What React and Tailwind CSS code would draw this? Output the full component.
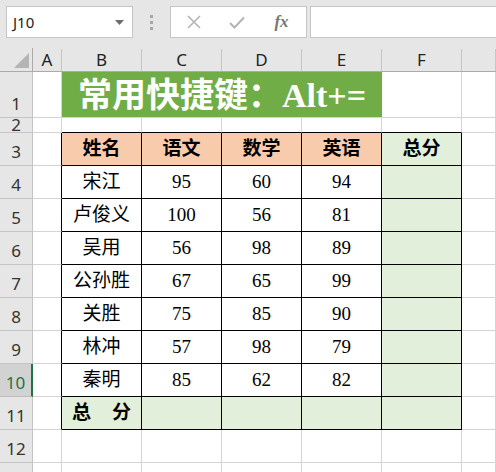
const rows = [
  ["宋江", "95", "60", "94"],
  ["卢俊义", "100", "56", "81"],
  ["吴用", "56", "98", "89"],
  ["公孙胜", "67", "65", "99"],
  ["关胜", "75", "85", "90"],
  ["林冲", "57", "98", "79"],
  ["秦明", "85", "62", "82"],
];

const serif = "font-['Liberation_Serif','Noto_Sans_CJK_SC',serif]";
const gridCell = "border-r border-b border-[#d4d4d4]";
const tableCell = "border-r border-b border-black flex items-center justify-center text-[19px] text-black";

const RowHead = ({ n, active }) => (
  <div
    className={
      active
        ? "bg-[#d2d2d2] border-r-2 border-r-[#217346] border-b border-b-[#bdbdbd] flex items-end justify-center pb-[1px] text-[17px] text-[#217346]"
        : "bg-[#e6e6e6] border-r border-b border-[#c4c4c4] flex items-end justify-center pb-[1px] text-[17px] text-[#333]"
    }
  >
    {n}
  </div>
);

const Toolbar = () => (
  <div className="h-[48px] bg-[#e6e6e6] flex items-start pt-[6px] pl-[6px] font-['Noto_Sans',sans-serif]">
    <div className="w-[127px] h-[32px] bg-white border border-[#c6c6c6] flex items-center justify-between pl-[6px] pr-[8px]">
      <span className="text-[15px] text-[#222]">J10</span>
      <svg width="9" height="5" viewBox="0 0 9 5">
        <path d="M0 0H9L4.5 5Z" fill="#6b6b6b" />
      </svg>
    </div>
    <div className="w-[37px] h-[32px] flex flex-col items-center justify-center gap-[3px]">
      <div className="w-[3px] h-[3px] bg-[#a6a6a6]" />
      <div className="w-[3px] h-[3px] bg-[#a6a6a6]" />
      <div className="w-[3px] h-[3px] bg-[#a6a6a6]" />
    </div>
    <div className="w-[137px] h-[32px] bg-white border border-[#c6c6c6] flex items-center">
      <div className="w-[46px] flex justify-center">
        <svg width="14" height="14" viewBox="0 0 14 14">
          <path d="M1 1L13 13M13 1L1 13" stroke="#b4b4b4" strokeWidth="1.6" />
        </svg>
      </div>
      <div className="w-[40px] flex justify-center">
        <svg width="16" height="13" viewBox="0 0 16 13">
          <path d="M1 7L5.5 11.5L15 1.5" stroke="#b4b4b4" strokeWidth="2" fill="none" />
        </svg>
      </div>
      <div className="flex-1 flex justify-center">
        <span className="font-['Liberation_Serif',serif] italic font-bold text-[17px] text-[#777]">fx</span>
      </div>
    </div>
    <div className="ml-[3px] flex-1 h-[32px] bg-white border border-[#c6c6c6] border-r-0" />
  </div>
);

export default function App() {
  const colHeads = ["A", "B", "C", "D", "E", "F", ""];
  return (
    <div className="w-[496px] h-[472px] overflow-hidden bg-white">
      <Toolbar />
      <div className="grid grid-cols-[33px_29px_80px_80px_80px_80px_80px_1fr] grid-rows-[24px_46px_15px_repeat(11,33px)] font-['Noto_Sans',sans-serif]">
        {/* header row */}
        <div className="bg-[#e6e6e6] border-r border-b border-[#ababab] relative">
          <svg className="absolute right-[3px] bottom-[3px]" width="15" height="15" viewBox="0 0 15 15">
            <path d="M15 0V15H0Z" fill="#b4b4b4" />
          </svg>
        </div>
        {colHeads.map((c, i) => (
          <div key={i} className="bg-[#e6e6e6] border-b border-[#ababab] flex items-end">
            <div className="flex-1 h-[22px] border-r border-[#c6c6c6] flex items-end justify-center pb-[1px] text-[17px] leading-[20px] text-[#222]">
              {c}
            </div>
          </div>
        ))}

        {/* row 1 */}
        <RowHead n="1" />
        <div className={gridCell} />
        <div className="col-span-4 bg-[#70ad47] border-b border-[#d4d4d4] flex items-center justify-center pt-[2px]">
          <span className={`${serif} font-bold text-white text-[34px] leading-none`}>常用快捷键：Alt+=</span>
        </div>
        <div className={gridCell} />
        <div className={gridCell} />

        {/* row 2 */}
        <div className="bg-[#e6e6e6] border-r border-b border-[#c4c4c4] flex items-end justify-center text-[17px] leading-[15px] text-[#333]">2</div>
        <div className={gridCell} />
        <div className="border-r border-[#d4d4d4] border-b border-b-black" />
        <div className="border-r border-[#d4d4d4] border-b border-b-black" />
        <div className="border-r border-[#d4d4d4] border-b border-b-black" />
        <div className="border-r border-[#d4d4d4] border-b border-b-black" />
        <div className="border-r border-[#d4d4d4] border-b border-b-black" />
        <div className={gridCell} />

        {/* row 3 header */}
        <RowHead n="3" />
        <div className="border-r border-r-black border-b border-b-[#d4d4d4]" />
        {["姓名", "语文", "数学", "英语"].map((h) => (
          <div key={h} className={`${tableCell} ${serif} bg-[#f8cbad] font-bold`}>
            {h}
          </div>
        ))}
        <div className={`${tableCell} ${serif} bg-[#e2efda] font-bold`}>总分</div>
        <div className={gridCell} />

        {/* data rows */}
        {rows.map((r, i) => [
          <RowHead key={`h${i}`} n={String(i + 4)} active={i === 6} />,
          <div key={`a${i}`} className="border-r border-r-black border-b border-b-[#d4d4d4]" />,
          ...r.map((v, j) => (
            <div key={`c${i}-${j}`} className={`${tableCell} ${serif}`}>
              {v}
            </div>
          )),
          <div key={`f${i}`} className={`${tableCell} bg-[#e2efda]`} />,
          <div key={`g${i}`} className={gridCell} />,
        ])}

        {/* row 11 */}
        <RowHead n="11" />
        <div className="border-r border-r-black border-b border-b-[#d4d4d4]" />
        <div className={`border-r border-b border-black bg-[#e2efda] flex items-center justify-between px-[10px] ${serif} font-bold text-[19px] text-black`}>
          <span>总</span>
          <span>分</span>
        </div>
        <div className={`${tableCell} bg-[#e2efda]`} />
        <div className={`${tableCell} bg-[#e2efda]`} />
        <div className={`${tableCell} bg-[#e2efda]`} />
        <div className={`${tableCell} bg-[#e2efda]`} />
        <div className={gridCell} />

        {/* row 12 */}
        <RowHead n="12" />
        {[0, 1, 2, 3, 4, 5, 6].map((k) => (
          <div key={`r12-${k}`} className={gridCell} />
        ))}

        {/* row 13, cut off by the window */}
        <RowHead n="" />
        {[0, 1, 2, 3, 4, 5, 6].map((k) => (
          <div key={`r13-${k}`} className={gridCell} />
        ))}
      </div>
    </div>
  );
}
